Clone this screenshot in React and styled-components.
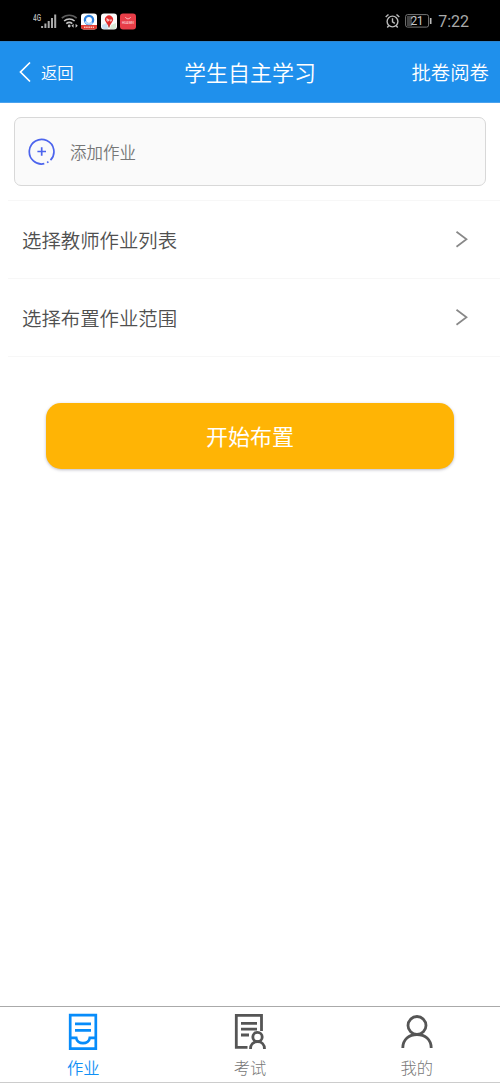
import React, { useState } from 'react'
import styled, { createGlobalStyle } from 'styled-components'

const GlobalStyle = createGlobalStyle`
  * {
    box-sizing: border-box;
  }
  body {
    margin: 0;
    background: #fff;
    font-family: "Noto Sans CJK SC", sans-serif;
    font-weight: 350;
  }
  button {
    border: 0;
    padding: 0;
    background: none;
    font: inherit;
    color: inherit;
  }
  svg {
    display: block;
    flex-shrink: 0;
  }
`

const Screen = styled.div`
  display: flex;
  flex-direction: column;
  height: 1083px;
  overflow: hidden;
`

const StatusBar = styled.div`
  display: flex;
  justify-content: space-between;
  height: 41px;
  padding: 0 31px 0 33px;
  background: #000;
`

const StatusGroup = styled.div`
  display: flex;
  align-items: center;
  gap: ${p => p.$gap}px;
  height: 42px;
`

const Clock = styled.span`
  margin-left: 1px;
  padding-top: 1px;
  font-family: Roboto, sans-serif;
  font-size: 16px;
  font-weight: 400;
  line-height: 20px;
  color: #aaa;
`

const Header = styled.header`
  display: grid;
  grid-template-columns: 1fr auto 1fr;
  align-items: center;
  height: 62px;
  padding: 0 11px 0 19px;
  border-top: 1px solid #2d86d0;
  border-bottom: 1px solid #4aa2ee;
  background: #1f90ec;
  color: #fff;
`

const BackButton = styled.button`
  display: flex;
  align-items: center;
  gap: 9px;
  font-size: 16.3px;
  line-height: 24px;
`

const Title = styled.h1`
  margin: 0 8px 2px 0;
  font-size: 22px;
  font-weight: 350;
  line-height: 32px;
`

const HeaderLink = styled.button`
  justify-self: end;
  font-size: 19.4px;
  line-height: 28px;
`

const Content = styled.main`
  flex: 1;
  padding-top: 14px;
`

const AddCard = styled.button`
  display: flex;
  align-items: center;
  gap: 14px;
  width: 472px;
  height: 69px;
  margin: 0 14px 14px;
  padding: 0 13px;
  border: 1px solid #d8d8d8;
  border-radius: 7px;
  background: #fafafa;
  color: #777;
  font-size: 16.5px;
`

const List = styled.div`
  margin-left: 8px;
  border-top: 1px solid #f7f7f7;
`

const ListRow = styled.div`
  display: flex;
  align-items: center;
  justify-content: space-between;
  height: 78px;
  padding: 0 32px 0 14px;
  border-bottom: 1px solid #f7f7f7;
  color: #505050;
  font-size: 19.4px;
  line-height: 28px;
`

const StartButton = styled.button`
  display: block;
  width: 408px;
  height: 66px;
  margin: 46px auto 0;
  padding-bottom: 2px;
  border-radius: 15px;
  background: #ffb405;
  box-shadow: 0 1px 3px rgba(60, 60, 90, 0.35);
  color: #fff;
  font-size: 22px;
  font-weight: 400;
`

const TabBar = styled.nav`
  display: grid;
  grid-template-columns: repeat(3, 1fr);
  height: 77px;
  border-top: 1px solid #aaa;
  border-bottom: 1px solid #ccc;
`

const Tab = styled.button`
  display: flex;
  flex-direction: column;
  align-items: center;
  padding-top: 5px;
  color: ${p => p.$active ? '#078cfa' : '#555'};
`

const TabLabel = styled.span`
  margin-top: 5px;
  font-size: 16.3px;
  font-weight: ${p => p.$active ? 350 : 300};
  line-height: 24px;
  color: ${p => p.$active ? '#1090f5' : '#777'};
`

const SignalIcon = () => (
  <svg width="24" height="20" viewBox="0 0 24 20">
    <text x="0" y="9.500" fontFamily="Roboto, sans-serif" fontSize="8.5" fontWeight="500" textLength="8" lengthAdjust="spacingAndGlyphs" fill="#b8b8b8">4G</text>
    <path d="M9.1 17v-2M12.4 17v-4.500M15.700 17v-7M19 17V7M22.200 17V3.500" stroke="#aaa" strokeWidth="2" />
  </svg>
)

const WifiIcon = () => (
  <svg width="17" height="16" viewBox="0 0 17 16" fill="none" strokeWidth="1.6">
    <path d="M.8 5.100C5 1.200 11.500 1.200 15.700 5.100" stroke="#5c5c5c" />
    <path d="M3.100 8c3-2.700 7.500-2.700 10.500 0M5.300 10.700c1.800-1.500 4.200-1.500 6 0" stroke="#c4c4c4" />
    <circle cx="8.200" cy="13" r="1.400" fill="#c4c4c4" />
    <path d="m10.400 12.700 2.200-2v4zM16.800 12.700l-2.200-2v4z" fill="#c4c4c4" />
  </svg>
)

const BrowserIcon = () => (
  <svg width="16" height="17" viewBox="0 0 16 17">
    <rect y=".5" width="16" height="16" rx="3" fill="#fff" />
    <path d="M0 12h16v1.500a3 3 0 0 1-3 3H3a3 3 0 0 1-3-3z" fill="#df3d32" />
    <circle cx="8" cy="7" r="4.100" fill="none" stroke="#2b80de" strokeWidth="2.300" />
    <path d="M4 8.500c1.500 2.300 4.600 3 7.500 1.500" fill="none" stroke="#b5dafa" strokeWidth="2" />
    <path d="M3 14.300h10" stroke="#ffc1b8" strokeWidth="1.500" strokeDasharray="1.500 .7" />
  </svg>
)

const MapIcon = () => (
  <svg width="16" height="17" viewBox="0 0 16 17">
    <rect y=".5" width="16" height="16" rx="3" fill="#fafafa" />
    <path d="m1 12 5-2 1 6H3a2 2 0 0 1-2-2z" fill="#c9dff1" />
    <path d="m10 12 5-2v4a2 2 0 0 1-2 2H9z" fill="#d7e8d5" />
    <path d="M8 14 4.900 9A4 4 0 1 1 11.100 9z" fill="#e32c2c" />
    <path d="M6 5v3M6 6.500h1.500V8H6M9 6.300V8h1.300V6.300" stroke="#fff" strokeWidth=".7" fill="none" />
    <path d="M8 12.500v2" stroke="#833" strokeWidth="1" />
  </svg>
)

const ShopIcon = () => (
  <svg width="16" height="17" viewBox="0 0 16 17">
    <rect y=".5" width="16" height="16" rx="3" fill="#e83e48" />
    <path d="M5.500 4c.4 2.400 4.600 2.400 5 0" fill="none" stroke="#ffd5d7" strokeWidth=".8" />
    <text x="2" y="11" fontFamily="Roboto, sans-serif" fontSize="3.500" fontWeight="500" textLength="12" lengthAdjust="spacingAndGlyphs" fill="#fcd5d7">HUAWEI</text>
  </svg>
)

const AlarmIcon = () => (
  <svg width="15" height="16" viewBox="0 0 15 16" fill="none" stroke="#bbb" strokeWidth="1.400">
    <circle cx="7.500" cy="8.500" r="5.400" />
    <path d="M7.500 5.300v3.500l2.300 1.500M.7 4 3.500 1.500M14.300 4l-2.800-2.500M3.700 12.700 2.300 14.500M11.300 12.700l1.400 1.800" />
  </svg>
)

const BatteryIcon = () => (
  <svg width="27" height="14" viewBox="0 0 27 14">
    <rect x=".6" y=".6" width="23" height="12.500" rx="2" fill="none" stroke="#777" />
    <path d="M2 2h5v10H2z" fill="#444" />
    <path d="M25.700 4v6" stroke="#bbb" strokeWidth="1.600" />
    <text x="5.600" y="11.200" fontFamily="Roboto, sans-serif" fontSize="12" fontWeight="400" textLength="13" fill="#c8c8c8">21</text>
  </svg>
)

const BackIcon = () => (
  <svg width="13" height="22" viewBox="0 0 13 22">
    <path d="M11 1.500 1.500 11 11 20.500" fill="none" stroke="#fff" strokeWidth="1.700" />
  </svg>
)

const AddIcon = () => (
  <svg width="28" height="28" viewBox="0 0 28 28" fill="none" stroke="#4c64ed" strokeWidth="1.700">
    <path d="M16.300 25.700A12.300 12.300 0 1 1 22.500 22.200" />
    <path d="M13.700 9.200v8.600M9.400 13.500h8.600" />
    <path d="m19.100 24.600 1.300-.8" />
  </svg>
)

const ArrowIcon = () => (
  <svg width="13" height="18" viewBox="0 0 13 18">
    <path d="m1.500 .8 10 7.500-10 7.500" fill="none" stroke="#888" strokeWidth="1.700" />
  </svg>
)

const HomeworkIcon = () => (
  <svg width="30" height="38" viewBox="0 0 30 38" fill="none" stroke="currentColor" strokeWidth="2.700">
    <path d="M2.200 3.200h25.600v33.400H2.200zM7 11.800h16M7 18.300h16" />
    <path d="M2.200 25.900h6c.9 7 12.700 7 13.600 0h6" />
  </svg>
)

const ExamIcon = () => (
  <svg width="32" height="38" viewBox="0 0 32 38" fill="none" stroke="currentColor" strokeWidth="2.800">
    <path d="M13.500 35.300H2.300V3.400h25.200v15.500M7 11.300h16M7 17.200h16M7 23h8" />
    <circle cx="23.500" cy="25" r="4.700" />
    <path d="M16.500 37c0-4.500 2.700-7.300 7-7.300s7 2.800 7 7.300" />
  </svg>
)

const MineIcon = () => (
  <svg width="32" height="38" viewBox="0 0 32 38" fill="none" stroke="currentColor" strokeWidth="2.800">
    <circle cx="16" cy="13.500" r="9" />
    <path d="M1.800 36c0-8.500 6.300-13.500 14.200-13.500s14.200 5 14.200 13.500" />
  </svg>
)

const rows = ['选择教师作业列表', '选择布置作业范围']

const tabs = [
  { label: '作业', Icon: HomeworkIcon },
  { label: '考试', Icon: ExamIcon },
  { label: '我的', Icon: MineIcon },
]

const App = () => {
  const [current, setCurrent] = useState(0)

  return (
    <Screen>
      <GlobalStyle />
      <StatusBar>
        <StatusGroup $gap={3.6}>
          <SignalIcon />
          <WifiIcon />
          <BrowserIcon />
          <MapIcon />
          <ShopIcon />
        </StatusGroup>
        <StatusGroup $gap={5}>
          <AlarmIcon />
          <BatteryIcon />
          <Clock>7:22</Clock>
        </StatusGroup>
      </StatusBar>
      <Header>
        <BackButton>
          <BackIcon />
          返回
        </BackButton>
        <Title>学生自主学习</Title>
        <HeaderLink>批卷阅卷</HeaderLink>
      </Header>
      <Content>
        <AddCard>
          <AddIcon />
          添加作业
        </AddCard>
        <List>
          {rows.map(row =>
            <ListRow key={row}>
              {row}
              <ArrowIcon />
            </ListRow>
          )}
        </List>
        <StartButton>开始布置</StartButton>
      </Content>
      <TabBar>
        {tabs.map(({ label, Icon }, i) =>
          <Tab key={label} $active={current === i} onClick={() => setCurrent(i)}>
            <Icon />
            <TabLabel $active={current === i}>{label}</TabLabel>
          </Tab>
        )}
      </TabBar>
    </Screen>
  )
}

export default App
